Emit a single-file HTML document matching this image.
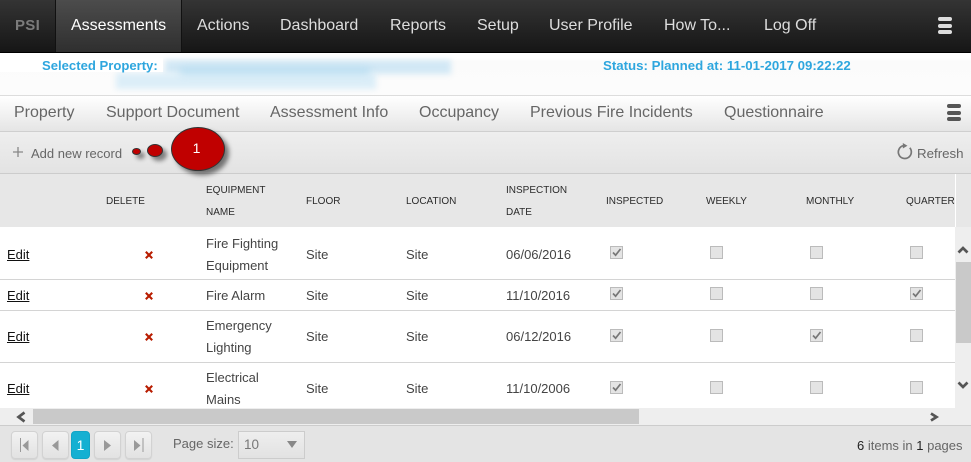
<!DOCTYPE html>
<html><head><meta charset="utf-8">
<style>
html,body{margin:0;padding:0;background:#fff}
#p{position:relative;width:971px;height:462px;overflow:hidden;font-family:"Liberation Sans",sans-serif;font-size:13px;color:#444}
#p div,#p span.t,#p a{position:absolute;white-space:nowrap}
.n{top:14px;font-size:16px;line-height:24px;color:#ddd}
.s{top:101px;font-size:16px;line-height:24px;color:#666}
.h{font-size:10px;line-height:14px;color:#2b2b2b}
.c{font-size:13px;line-height:18px;color:#444}
.e{left:7px;font-size:13px;line-height:18px;color:#111;text-decoration:underline}
.b{box-sizing:border-box;width:13px;height:13px;background:#e4e4e4;border:1px solid #bbb}
.l{left:0;width:955px;height:1px;background:#d4d4d4}
.pg{box-sizing:border-box;top:431px;width:27px;height:28px;border:1px solid #d2d2d2;border-radius:4px;background:linear-gradient(#f2f2f2,#e2e2e2);box-shadow:0 1px 1px rgba(0,0,0,.08)}
svg{position:absolute;overflow:visible}
</style></head><body><div id="p">

<div style="left:0;top:0;width:971px;height:52px;background:linear-gradient(#343434,#161616)"></div>
<div style="left:0;top:52px;width:971px;height:1px;background:#000"></div>
<div style="left:55px;top:0;width:127px;height:52px;box-sizing:border-box;border-left:1px solid #111;border-right:1px solid #111;background:linear-gradient(#4c4c4c,#2f2f2f)"></div>
<div style="left:15px;top:14px;font-size:15px;line-height:24px;font-weight:bold;color:#7c7c7c;letter-spacing:.3px">PSI</div>
<div class="n" style="left:71px;color:#fff">Assessments</div>
<div class="n" style="left:197px">Actions</div>
<div class="n" style="left:280px">Dashboard</div>
<div class="n" style="left:390px">Reports</div>
<div class="n" style="left:477px">Setup</div>
<div class="n" style="left:549px">User Profile</div>
<div class="n" style="left:664px">How To...</div>
<div class="n" style="left:764px">Log Off</div>
<div style="left:938px;top:17px;width:14px;height:4px;border-radius:2px;background:#ddd"></div>
<div style="left:938px;top:24px;width:14px;height:4px;border-radius:2px;background:#ddd"></div>
<div style="left:938px;top:30px;width:14px;height:4px;border-radius:2px;background:#ddd"></div>

<div style="left:0;top:53px;width:971px;height:42px;background:linear-gradient(#fff 10%,#fbfbfb 20%,#fcfcfc)"></div>
<div style="left:165px;top:60px;width:286px;height:14px;background:#d2e8f5;filter:blur(3px)"></div>
<div style="left:116px;top:73px;width:260px;height:16px;background:#dceef8;filter:blur(3px)"></div>
<div style="left:180px;top:68px;width:190px;height:6px;background:#b4dcf1;filter:blur(4px)"></div>
<div style="left:0;top:58px;width:163px;height:14px;background:#fff"></div>
<div style="left:42px;top:58px;font-size:13.1px;line-height:16px;font-weight:bold;color:#2ea6de">Selected Property:</div>
<div style="left:603px;top:58px;font-size:13.27px;line-height:16px;font-weight:bold;color:#2ea6de">Status: Planned at: 11-01-2017 09:22:22</div>

<div style="left:0;top:95px;width:971px;height:1px;background:#ddd"></div>
<div style="left:0;top:96px;width:971px;height:35px;background:linear-gradient(#fff,#e5e5e5)"></div>
<div style="left:0;top:131px;width:971px;height:1px;background:#cfcfcf"></div>
<div class="s" style="left:14px">Property</div>
<div class="s" style="left:106px">Support Document</div>
<div class="s" style="left:270px">Assessment Info</div>
<div class="s" style="left:419px">Occupancy</div>
<div class="s" style="left:530px">Previous Fire Incidents</div>
<div class="s" style="left:724px">Questionnaire</div>
<div style="left:947px;top:104px;width:14px;height:4px;border-radius:2px;background:#555"></div>
<div style="left:947px;top:111px;width:14px;height:4px;border-radius:2px;background:#555"></div>
<div style="left:947px;top:117px;width:14px;height:4px;border-radius:2px;background:#555"></div>

<div style="left:0;top:132px;width:971px;height:41px;background:linear-gradient(#eeeeee,#e3e3e3)"></div>
<div style="left:0;top:173px;width:971px;height:1px;background:#ccc"></div>
<svg style="left:13px;top:147px" width="10" height="10"><path d="M5 0V10M0 5H10" stroke="#888" stroke-width="1.3" fill="none"/></svg>
<div style="left:31px;top:145px;font-size:13px;line-height:17px;color:#666">Add new record</div>
<svg style="left:893px;top:140px" width="24" height="24"><path d="M16.800 7.800A6.500 6.500 0 1 1 10.300 5.700" fill="none" stroke="#777" stroke-width="1.7"/><path d="M9.800 3L14.500 5.800L9.800 8.500Z" fill="#777"/></svg>
<div style="left:917px;top:145px;font-size:13.3px;line-height:17px;color:#666">Refresh</div>

<div style="left:0;top:174px;width:971px;height:53px;background:#e7e7e7"></div>
<div style="left:955px;top:174px;width:1px;height:53px;background:#fff"></div>
<div style="left:0;top:227px;width:955px;height:181px;background:#fff"></div>

<div class="h" style="left:106px;top:195px">DELETE</div>
<div class="h" style="left:206px;top:184px">EQUIPMENT</div>
<div class="h" style="left:206px;top:206px">NAME</div>
<div class="h" style="left:306px;top:195px">FLOOR</div>
<div class="h" style="left:406px;top:195px">LOCATION</div>
<div class="h" style="left:506px;top:184px">INSPECTION</div>
<div class="h" style="left:506px;top:206px">DATE</div>
<div class="h" style="left:606px;top:195px">INSPECTED</div>
<div class="h" style="left:706px;top:195px">WEEKLY</div>
<div class="h" style="left:806px;top:195px">MONTHLY</div>
<div class="h" style="left:906px;top:195px;width:49px;overflow:hidden">QUARTERLY</div>

<div class="l" style="top:279px"></div>
<div class="l" style="top:310px"></div>
<div class="l" style="top:362px"></div>

<a class="e" style="top:246px">Edit</a>
<a class="e" style="top:287px">Edit</a>
<a class="e" style="top:328px">Edit</a>
<a class="e" style="top:380px">Edit</a>

<svg style="left:145px;top:251px" width="8" height="8"><path d="M.8 .8L7.200 7.200M7.200 .8L.8 7.200" stroke="#b81c00" stroke-width="2.1"/></svg>
<svg style="left:145px;top:292px" width="8" height="8"><path d="M.8 .8L7.200 7.200M7.200 .8L.8 7.200" stroke="#b81c00" stroke-width="2.1"/></svg>
<svg style="left:145px;top:333px" width="8" height="8"><path d="M.8 .8L7.200 7.200M7.200 .8L.8 7.200" stroke="#b81c00" stroke-width="2.1"/></svg>
<svg style="left:145px;top:385px" width="8" height="8"><path d="M.8 .8L7.200 7.200M7.200 .8L.8 7.200" stroke="#b81c00" stroke-width="2.1"/></svg>

<div class="c" style="left:206px;top:235px">Fire Fighting</div>
<div class="c" style="left:206px;top:257px">Equipment</div>
<div class="c" style="left:206px;top:287px">Fire Alarm</div>
<div class="c" style="left:206px;top:317px">Emergency</div>
<div class="c" style="left:206px;top:339px">Lighting</div>
<div class="c" style="left:206px;top:369px">Electrical</div>
<div class="c" style="left:206px;top:391px">Mains</div>

<div class="c" style="left:306px;top:246px">Site</div><div class="c" style="left:406px;top:246px">Site</div><div class="c" style="left:506px;top:246px">06/06/2016</div>
<div class="c" style="left:306px;top:287px">Site</div><div class="c" style="left:406px;top:287px">Site</div><div class="c" style="left:506px;top:287px">11/10/2016</div>
<div class="c" style="left:306px;top:328px">Site</div><div class="c" style="left:406px;top:328px">Site</div><div class="c" style="left:506px;top:328px">06/12/2016</div>
<div class="c" style="left:306px;top:380px">Site</div><div class="c" style="left:406px;top:380px">Site</div><div class="c" style="left:506px;top:380px">11/10/2006</div>

<div class="b" style="left:610px;top:246px"></div><div class="b" style="left:710px;top:246px"></div><div class="b" style="left:810px;top:246px"></div><div class="b" style="left:910px;top:246px"></div>
<div class="b" style="left:610px;top:287px"></div><div class="b" style="left:710px;top:287px"></div><div class="b" style="left:810px;top:287px"></div><div class="b" style="left:910px;top:287px"></div>
<div class="b" style="left:610px;top:329px"></div><div class="b" style="left:710px;top:329px"></div><div class="b" style="left:810px;top:329px"></div><div class="b" style="left:910px;top:329px"></div>
<div class="b" style="left:610px;top:381px"></div><div class="b" style="left:710px;top:381px"></div><div class="b" style="left:810px;top:381px"></div><div class="b" style="left:910px;top:381px"></div>

<svg style="left:610px;top:246px" width="13" height="13"><path d="M3 6.500L5.600 9.200L10.500 3" fill="none" stroke="#777" stroke-width="1.7"/></svg>
<svg style="left:610px;top:287px" width="13" height="13"><path d="M3 6.500L5.600 9.200L10.500 3" fill="none" stroke="#777" stroke-width="1.7"/></svg>
<svg style="left:910px;top:287px" width="13" height="13"><path d="M3 6.500L5.600 9.200L10.500 3" fill="none" stroke="#777" stroke-width="1.7"/></svg>
<svg style="left:610px;top:329px" width="13" height="13"><path d="M3 6.500L5.600 9.200L10.500 3" fill="none" stroke="#777" stroke-width="1.7"/></svg>
<svg style="left:810px;top:329px" width="13" height="13"><path d="M3 6.500L5.600 9.200L10.500 3" fill="none" stroke="#777" stroke-width="1.7"/></svg>
<svg style="left:610px;top:381px" width="13" height="13"><path d="M3 6.500L5.600 9.200L10.500 3" fill="none" stroke="#777" stroke-width="1.7"/></svg>

<div style="left:955px;top:227px;width:16px;height:198px;background:#eee"></div>
<div style="left:956px;top:262px;width:15px;height:81px;background:#c9c9c9"></div>
<svg style="left:957px;top:245px" width="12" height="9"><path d="M1.500 7.500L6 3L10.500 7.500" fill="none" stroke="#555" stroke-width="2.700"/></svg>
<svg style="left:957px;top:381px" width="12" height="9"><path d="M1.500 1.500L6 6L10.500 1.500" fill="none" stroke="#555" stroke-width="2.700"/></svg>

<div style="left:0;top:408px;width:955px;height:17px;background:#eee"></div>
<div style="left:33px;top:409px;width:606px;height:15px;background:#c9c9c9"></div>
<svg style="left:15px;top:411px" width="10" height="12"><path d="M9.500 1.500L3.500 6L9.500 10.500" fill="none" stroke="#555" stroke-width="2.700"/></svg>
<svg style="left:929px;top:411px" width="10" height="12"><path d="M2 2.500L7.500 6L2 9.500" fill="none" stroke="#555" stroke-width="2.700"/></svg>

<div style="left:0;top:425px;width:971px;height:1px;background:#ccc"></div>
<div style="left:0;top:426px;width:971px;height:36px;background:#e4e4e4"></div>
<div class="pg" style="left:11px"></div>
<div class="pg" style="left:42px"></div>
<div class="pg" style="left:71px;width:19px;border:1px solid #12a5c6;background:#15b0d2;color:#fff;font-size:14px;line-height:26px;text-align:center;box-shadow:none">1</div>
<div class="pg" style="left:94px"></div>
<div class="pg" style="left:125px"></div>
<svg style="left:10px;top:431px" width="28" height="28"><path d="M10.500 7V21" stroke="#999" stroke-width="1"/><path d="M18.500 9V20L12.500 14.500Z" fill="#999"/></svg>
<svg style="left:41px;top:431px" width="28" height="28"><path d="M17.500 9V20L11 14.500Z" fill="#999"/></svg>
<svg style="left:93px;top:431px" width="28" height="28"><path d="M11 9V20L18 14.500Z" fill="#999"/></svg>
<svg style="left:124px;top:431px" width="28" height="28"><path d="M10 9V20L16.500 14.500Z" fill="#999"/><path d="M19 7V21" stroke="#999" stroke-width="1"/></svg>

<div style="left:173px;top:435px;font-size:13px;line-height:17px;color:#666">Page size:</div>
<div style="box-sizing:border-box;left:238px;top:431px;width:67px;height:28px;border:1px solid #ccc;background:linear-gradient(#eee,#e2e2e2)"></div>
<div style="left:244px;top:436px;font-size:13.500px;line-height:17px;color:#777">10</div>
<svg style="left:287px;top:441px" width="10" height="8"><path d="M0 0H10L5 7Z" fill="#888"/></svg>

<div style="left:857px;top:437px;font-size:13px;line-height:17px;color:#666"><b style="font-weight:normal;color:#222">6</b> items in <b style="font-weight:normal;color:#222">1</b> pages</div>

<div style="left:132px;top:148px;width:9px;height:7px;border-radius:50%;box-sizing:border-box;background:#c00000;border:1px solid #333;box-shadow:4px 4px 4px rgba(0,0,0,.45)"></div>
<div style="left:147px;top:144px;width:16px;height:13px;border-radius:50%;box-sizing:border-box;background:#c00000;border:1px solid #333;box-shadow:4px 4px 4px rgba(0,0,0,.45)"></div>
<div style="left:171px;top:127px;width:54px;height:44px;border-radius:50%;box-sizing:border-box;background:#c00000;border:1px solid #333;box-shadow:4px 4px 5px rgba(0,0,0,.5);color:#fff;font-size:14px;line-height:40px;text-align:center;padding-right:3px">1</div>

</div></body></html>
